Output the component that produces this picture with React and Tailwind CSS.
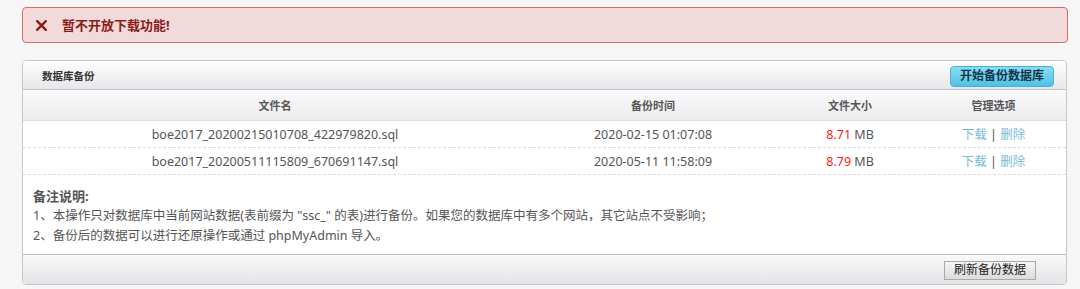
const FONT = { fontFamily: '"Noto Sans", "Noto Sans CJK SC", sans-serif' };

const rows = [
  { name: 'boe2017_20200215010708_422979820.sql', time: '2020-02-15 01:07:08', size: '8.71' },
  { name: 'boe2017_20200511115809_670691147.sql', time: '2020-05-11 11:58:09', size: '8.79' },
];

function AlertX() {
  return (
    <svg width="11" height="11" viewBox="0 0 11 11" className="shrink-0">
      <path d="M1.2 1.2 L9.8 9.8 M9.8 1.2 L1.2 9.8" stroke="#8b1c1c" strokeWidth="2.4" strokeLinecap="square" />
    </svg>
  );
}

export default function App() {
  return (
    <div className="w-[1080px] h-[289px] bg-[#f6f6f6] pt-[7px] text-[#555]" style={FONT}>
      {/* Alert */}
      <div className="ml-[22px] w-[1046px] h-[36px] flex items-center rounded-[4px] border border-[#e06a6a] bg-[#f2dada] pl-[13px]">
        <AlertX />
        <span className="ml-[15px] text-[13px] font-bold text-[#8b1c1c] leading-none">暂不开放下载功能!</span>
      </div>

      {/* Panel */}
      <div className="ml-[22px] mt-[17px] w-[1045px] rounded-[4px] border border-[#c6c6cf] bg-white overflow-hidden">
        {/* Panel header */}
        <div className="h-[29px] flex items-center justify-between pl-[19px] pr-[12px] bg-gradient-to-b from-[#ffffff] to-[#e7e7eb] border-b border-[#c3c3cd]">
          <span className="pt-[3px] text-[10.5px] font-bold text-[#333]">数据库备份</span>
          <button className="h-[21px] w-[104px] mt-[2px] rounded-[4px] border border-[#43b3d6] bg-gradient-to-b from-[#8adcf2] to-[#4fc0e3] text-[12px] font-bold text-[#10364a] leading-none">
            开始备份数据库
          </button>
        </div>

        {/* Column header */}
        <div className="grid grid-cols-[504px_252px_142px_1fr] h-[31px] pt-[3px] items-center bg-gradient-to-b from-[#fbfbfb] to-[#ececef] border-b border-[#dcdce2] text-[11px] font-bold text-[#555] text-center">
          <span>文件名</span>
          <span>备份时间</span>
          <span>文件大小</span>
          <span>管理选项</span>
        </div>

        {/* Rows */}
        {rows.map((r) => (
          <div
            key={r.name}
            className="grid grid-cols-[504px_252px_142px_1fr] h-[27px] pt-[3px] items-center border-b border-dashed border-[#dddddd] text-[12.5px] text-[#555] text-center"
          >
            <span>{r.name}</span>
            <span>{r.time}</span>
            <span>
              <span className="text-[#ff1a1a]">{r.size}</span> MB
            </span>
            <span>
              <span className="text-[#7bbad6]">下载</span>
              <span className="text-[#555]"> | </span>
              <span className="text-[#7bbad6]">删除</span>
            </span>
          </div>
        ))}

        {/* Notes */}
        <div className="h-[79px] px-[10px] pt-[11px] text-[12.5px] leading-[20px] text-[#555]">
          <p className="font-bold text-[13px] text-[#555]">备注说明:</p>
          <p>1、本操作只对数据库中当前网站数据(表前缀为 "ssc_" 的表)进行备份。如果您的数据库中有多个网站，其它站点不受影响；</p>
          <p>2、备份后的数据可以进行还原操作或通过 phpMyAdmin 导入。</p>
        </div>

        {/* Footer */}
        <div className="h-[30px] flex items-center justify-end pr-[30px] bg-gradient-to-b from-[#f9f9f9] to-[#e4e4e7] border-t border-[#bdbdc8]">
          <button className="h-[19px] w-[92px] mt-[1px] border border-[#a9a9a9] bg-gradient-to-b from-[#f6f6f6] to-[#dcdcdc] text-[12px] text-[#222] leading-none">
            刷新备份数据
          </button>
        </div>
      </div>
    </div>
  );
}
